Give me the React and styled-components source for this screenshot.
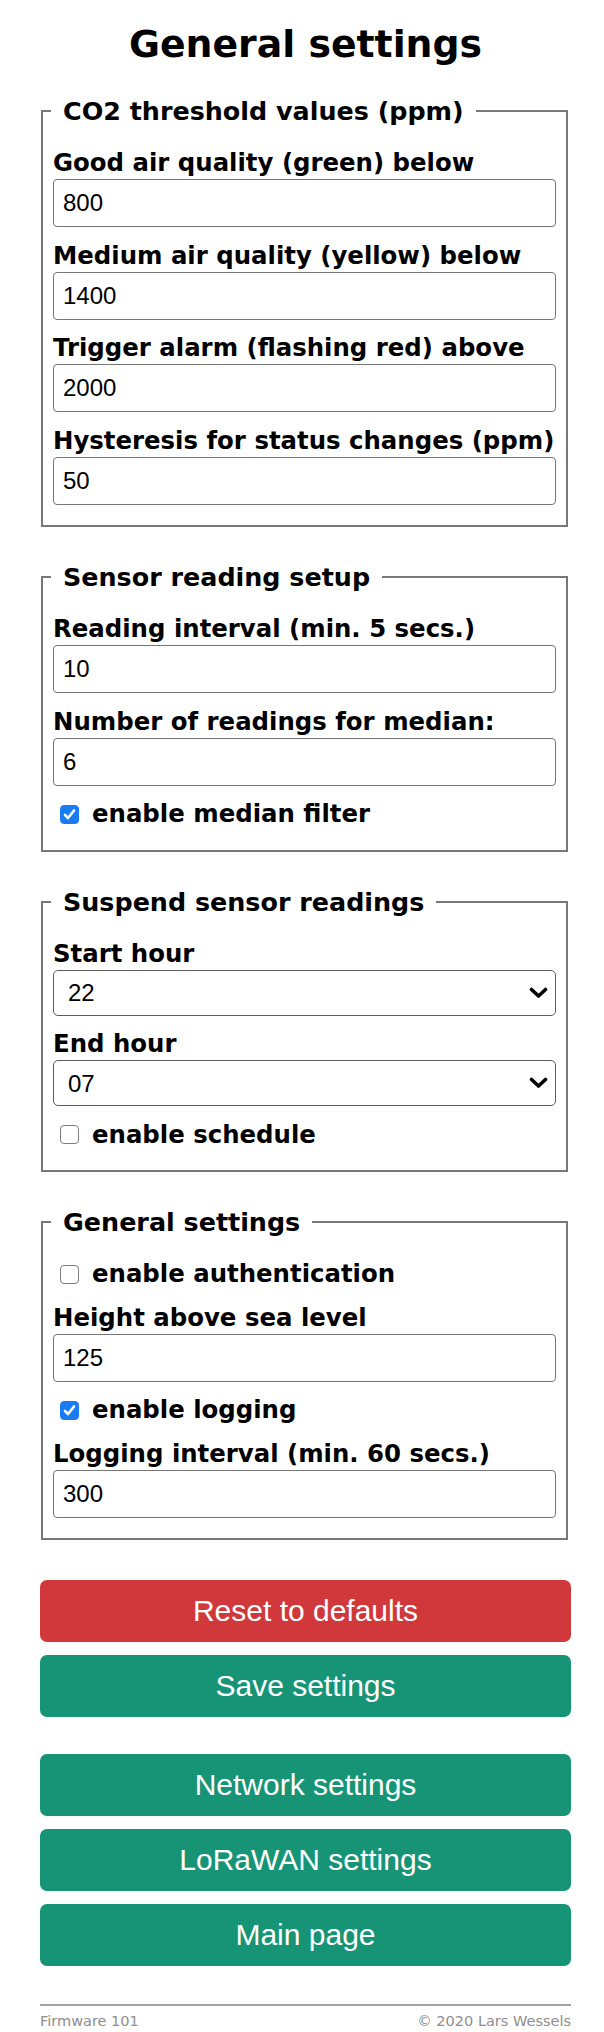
import React from "react";
import styled, { createGlobalStyle } from "styled-components";

const GlobalStyle = createGlobalStyle`
  html, body {
    margin: 0;
    padding: 0;
    background: #fff;
  }
  body {
    font-family: "DejaVu Sans", Verdana, sans-serif;
    color: #000;
  }
`;

const Page = styled.div`
  width: 531px;
  margin-left: 40px;
`;

const Title = styled.h1`
  margin: 22px 0 30px;
  font-size: 37.8px;
  line-height: 44px;
  font-weight: bold;
  text-align: center;
`;

const Form = styled.form`
  display: flex;
  flex-direction: column;
  gap: 35px;
`;

const Fieldset = styled.fieldset`
  display: flex;
  flex-direction: column;
  gap: 13.5px;
  min-width: 0;
  margin: 0 3px 0 1px;
  padding: 22px 10px 20.5px;
  border: 2px solid #787878;
`;

const Legend = styled.legend`
  margin-left: -2px;
  padding: 0 12px;
  font-size: 25.4px;
  line-height: 30px;
  font-weight: bold;
`;

const Field = styled.div`
  display: flex;
  flex-direction: column;
  gap: 1px;
`;

const Label = styled.label`
  font-size: 24.4px;
  line-height: 30px;
  font-weight: bold;
  white-space: nowrap;
`;

const TextInput = styled.input`
  box-sizing: border-box;
  width: 100%;
  height: 48px;
  margin: 0;
  padding: 0 9px;
  border: 1px solid #767676;
  border-radius: 4px;
  background: #fff;
  color: #000;
  font-family: "Liberation Sans", Arial, sans-serif;
  font-size: 24px;
`;

const SelectBox = styled.div`
  position: relative;
`;

const Select = styled.select`
  appearance: none;
  box-sizing: border-box;
  width: 100%;
  height: 46px;
  margin: 0;
  padding: 0 40px 0 14px;
  border: 1px solid #5c5c5c;
  border-radius: 5px;
  background: #fff;
  color: #000;
  font-family: "Liberation Sans", Arial, sans-serif;
  font-size: 24px;
`;

const Chevron = styled.svg`
  position: absolute;
  right: 8px;
  top: 50%;
  transform: translateY(-50%);
  pointer-events: none;
`;

const CheckRow = styled.label`
  display: flex;
  align-items: center;
  gap: 13px;
  padding-left: 7px;
  font-size: 24.4px;
  line-height: 30px;
  font-weight: bold;
  white-space: nowrap;

  input {
    position: absolute;
    opacity: 0;
    width: 0;
    height: 0;
    margin: 0;
  }
`;

const Box = styled.span`
  flex: none;
  display: flex;
  align-items: center;
  justify-content: center;
  box-sizing: border-box;
  width: 19px;
  height: 19px;
  border-radius: 4px;
  border: 1px solid ${(p) => (p.$checked ? "#1a7cf5" : "#7d7d7d")};
  background: ${(p) => (p.$checked ? "#1a7cf5" : "#fff")};
`;

const Actions = styled.div`
  display: flex;
  flex-direction: column;
  gap: 37px;
  margin-top: 40px;
`;

const ButtonGroup = styled.div`
  display: flex;
  flex-direction: column;
  gap: 13px;
`;

const Button = styled.button`
  width: 100%;
  height: 62px;
  margin: 0;
  padding: 0;
  border: 0;
  border-radius: 7px;
  background: ${(p) => (p.$danger ? "#d1383c" : "#179476")};
  color: #fff;
  font-family: "Liberation Sans", Arial, sans-serif;
  font-size: 30px;
  cursor: pointer;
`;

const Footer = styled.footer`
  display: flex;
  justify-content: space-between;
  margin-top: 38px;
  padding-top: 6px;
  border-top: 2px solid #a3a3a3;
  font-size: 14.5px;
  line-height: 18px;
  color: #8f8f8f;
`;

const hours = Array.from({ length: 24 }, (_, i) => String(i).padStart(2, "0"));

const TextField = ({ label, value }) => (
  <Field>
    <Label>{label}</Label>
    <TextInput type="text" defaultValue={value} />
  </Field>
);

const HourField = ({ label, value }) => (
  <Field>
    <Label>{label}</Label>
    <SelectBox>
      <Select defaultValue={value}>
        {hours.map((h) => (
          <option key={h} value={h}>
            {h}
          </option>
        ))}
      </Select>
      <Chevron width="19" height="12" viewBox="0 0 19 12">
        <polyline
          points="2.5,2.5 9.5,9 16.5,2.5"
          fill="none"
          stroke="#000"
          strokeWidth="3.6"
          strokeLinecap="round"
          strokeLinejoin="round"
        />
      </Chevron>
    </SelectBox>
  </Field>
);

const Checkbox = ({ label, checked }) => (
  <CheckRow>
    <input type="checkbox" defaultChecked={checked} />
    <Box $checked={checked}>
      {checked && (
        <svg width="13" height="13" viewBox="0 0 13 13">
          <polyline
            points="2,7 5,10 11,2.5"
            fill="none"
            stroke="#fff"
            strokeWidth="2.6"
            strokeLinecap="round"
            strokeLinejoin="round"
          />
        </svg>
      )}
    </Box>
    {label}
  </CheckRow>
);

export default function App() {
  return (
    <Page>
      <GlobalStyle />
      <Title>General settings</Title>
      <Form onSubmit={(e) => e.preventDefault()}>
        <Fieldset>
          <Legend>CO2 threshold values (ppm)</Legend>
          <TextField label="Good air quality (green) below" value="800" />
          <TextField label="Medium air quality (yellow) below" value="1400" />
          <TextField label="Trigger alarm (flashing red) above" value="2000" />
          <TextField label="Hysteresis for status changes (ppm)" value="50" />
        </Fieldset>

        <Fieldset>
          <Legend>Sensor reading setup</Legend>
          <TextField label="Reading interval (min. 5 secs.)" value="10" />
          <TextField label="Number of readings for median:" value="6" />
          <Checkbox label="enable median filter" checked />
        </Fieldset>

        <Fieldset>
          <Legend>Suspend sensor readings</Legend>
          <HourField label="Start hour" value="22" />
          <HourField label="End hour" value="07" />
          <Checkbox label="enable schedule" />
        </Fieldset>

        <Fieldset>
          <Legend>General settings</Legend>
          <Checkbox label="enable authentication" />
          <TextField label="Height above sea level" value="125" />
          <Checkbox label="enable logging" checked />
          <TextField label="Logging interval (min. 60 secs.)" value="300" />
        </Fieldset>
      </Form>

      <Actions>
        <ButtonGroup>
          <Button $danger>Reset to defaults</Button>
          <Button>Save settings</Button>
        </ButtonGroup>
        <ButtonGroup>
          <Button>Network settings</Button>
          <Button>LoRaWAN settings</Button>
          <Button>Main page</Button>
        </ButtonGroup>
      </Actions>

      <Footer>
        <span>Firmware 101</span>
        <span>© 2020 Lars Wessels</span>
      </Footer>
    </Page>
  );
}
